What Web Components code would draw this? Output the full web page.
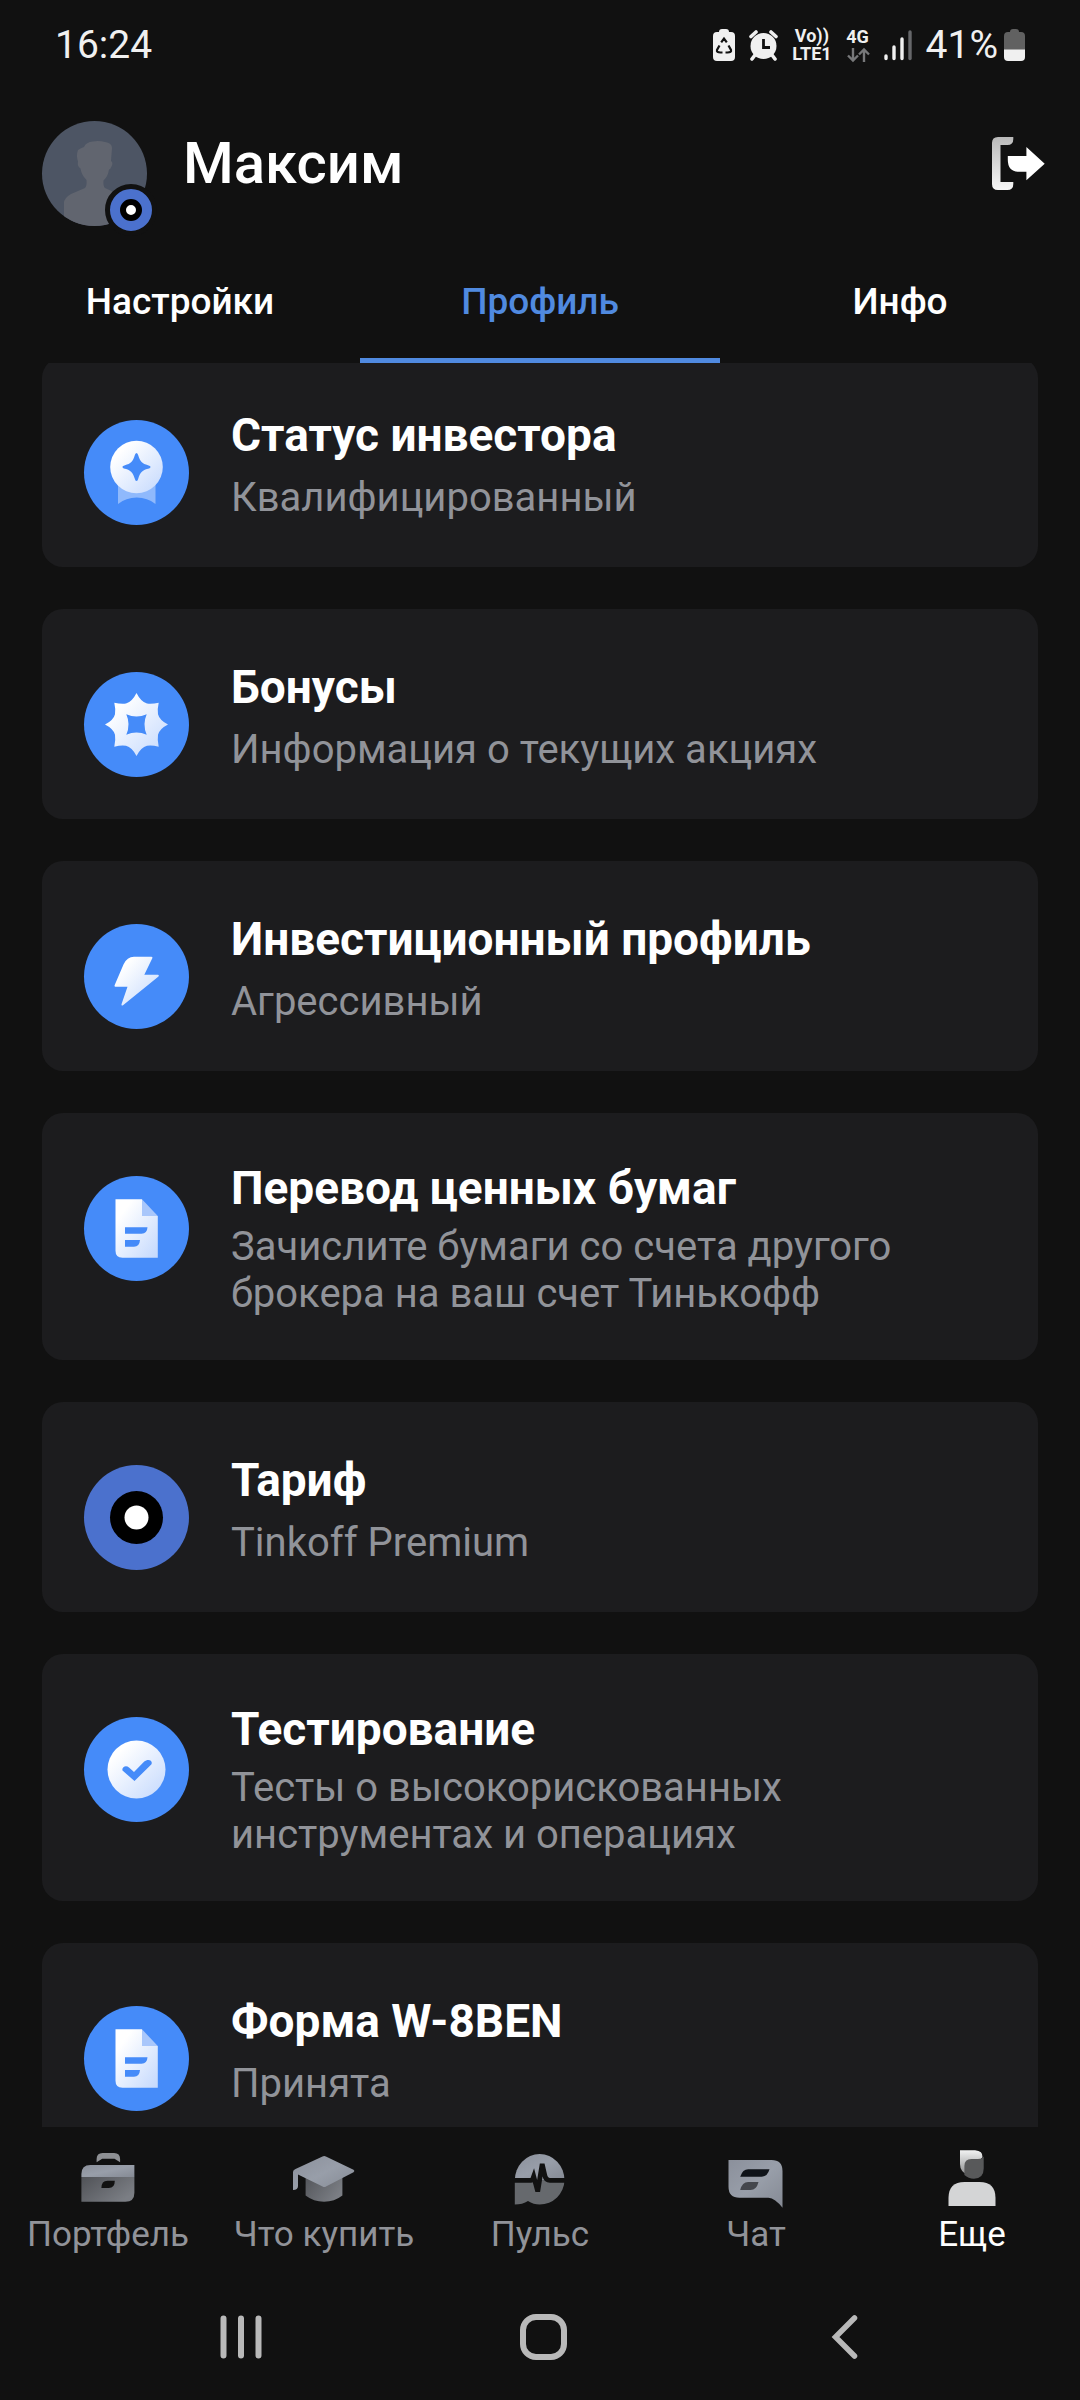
<!DOCTYPE html>
<html lang="ru">
<head>
<meta charset="utf-8">
<meta name="viewport" content="width=device-width, initial-scale=1">
<title>Профиль</title>
<style>
  body {
    margin: 0;
    background: #111111;
    color: #ffffff;
    font-family: Roboto, "Noto Sans", sans-serif;
  }
</style>
</head>
<body>
<app-shell>
  <status-bar slot="top" time="16:24" battery="41%"></status-bar>
  <profile-header slot="top" name="Максим"></profile-header>
  <tab-bar slot="top">
    <tab-item>Настройки</tab-item>
    <tab-item active>Профиль</tab-item>
    <tab-item>Инфо</tab-item>
  </tab-bar>

  <info-card icon="medal">Статус инвестора<span slot="text">Квалифицированный</span></info-card>
  <info-card icon="bonus">Бонусы<span slot="text">Информация о текущих акциях</span></info-card>
  <info-card icon="bolt">Инвестиционный профиль<span slot="text">Агрессивный</span></info-card>
  <info-card icon="document">Перевод ценных бумаг<span slot="text">Зачислите бумаги со счета другого брокера на ваш счет Тинькофф</span></info-card>
  <info-card icon="tariff">Тариф<span slot="text">Tinkoff Premium</span></info-card>
  <info-card icon="check">Тестирование<span slot="text">Тесты о высокорискованных инструментах и операциях</span></info-card>
  <info-card icon="document">Форма W-8BEN<span slot="text">Принята</span></info-card>

  <bottom-nav slot="bottom">
    <nav-item icon="briefcase">Портфель</nav-item>
    <nav-item icon="cap">Что купить</nav-item>
    <nav-item icon="pulse">Пульс</nav-item>
    <nav-item icon="chat">Чат</nav-item>
    <nav-item icon="person" active>Еще</nav-item>
  </bottom-nav>
  <system-nav slot="bottom"></system-nav>
</app-shell>

<script>
const shine = `
  <defs>
    <linearGradient id="shine" x1="0" y1="0" x2="1" y2="1">
      <stop offset="0.2" stop-color="#ffffff"/>
      <stop offset="1" stop-color="#c3d8fd"/>
    </linearGradient>
  </defs>`;

const disc = `<circle cx="52.5" cy="52.5" r="52.5" fill="#458bf9"/>`;

const steel = `
  <defs>
    <linearGradient id="light" x1="0" y1="0" x2="1" y2="1">
      <stop offset="0" stop-color="#8b909b"/>
      <stop offset="0.5" stop-color="#989ea9"/>
      <stop offset="1" stop-color="#858a94"/>
    </linearGradient>
    <linearGradient id="dark" x1="0" y1="0" x2="1" y2="0.6">
      <stop offset="0" stop-color="#505257"/>
      <stop offset="1" stop-color="#7b7e84"/>
    </linearGradient>
  </defs>`;

// [width, height, markup]
const icons = {
  medal: [105, 105, `${shine}${disc}
    <path d="M34 60h37.500v24q-8-6.500-18.750-6.500T34 84z" fill="#8fb9fc"/>
    <circle cx="52.500" cy="47" r="26.300" fill="url(#shine)"/>
    <path d="M52.500 33q1.200 0 1.800 2.500c1.700 5.700 4 8.300 9.700 9.700 1.800.5 2.500 1 2.500 1.800s-.7 1.300-2.500 1.800c-5.700 1.400-8 4-9.700 9.700q-.600 2.500-1.800 2.500t-1.800-2.500c-1.700-5.700-4-8.300-9.700-9.700-1.800-.5-2.500-1-2.500-1.800s.7-1.300 2.500-1.800c5.700-1.400 8-4 9.700-9.700q.600-2.500 1.800-2.500z" fill="#458bf9"/>`],
  bonus: [105, 105, `${shine}${disc}
    <path fill="url(#shine)" fill-rule="evenodd" d="M52.500 21Q57 30 63 31.500q5 .7 11.700-.8-1.500 6.500-.7 11.500 1.500 6 10 10.300-8.500 4.300-10 10.300-.8 5 .7 11.900-6.700-1.600-11.700-.9-6 1.500-10.500 10.200Q48 75.300 42 73.800q-5-.7-11.700.9 1.500-6.900.7-11.900-1.500-6-10-10.300 8.500-4.300 10-10.300.8-5-.7-11.500 6.700 1.500 11.700.8Q48 30 52.500 21zM42.300 42.300q4.500 10.200 0 20.400 10.200-4.500 20.400 0-4.500-10.200 0-20.400-10.200 4.500-20.400 0z"/>`],
  bolt: [105, 105, `${shine}${disc}
    <path d="M50 32.700h17.500q1.500 0 .8 1.500l-8 16.500H74q1.500.3.500 1.700L39 81.300q-1.800.8-1.500-1l6-17.600H31.300q-1.200-.2-.7-1.500l9-21q3.400-7.300 10.400-7.500z" fill="url(#shine)"/>`],
  document: [105, 105, `${shine}${disc}
    <path d="M58 23.300 73.800 40H58z" fill="#a9c7fb"/>
    <path d="M31.500 23.300H58V40h15.800v41.700H38.500q-7 0-7-7z" fill="url(#shine)"/>
    <path d="M41 51.300h22.500q-.3 6.400-6 6.400H41zM41 64h15q-.5 6.700-6 6.700h-9z" fill="#458bf9"/>`],
  tariff: [105, 105, `
    <circle cx="52.500" cy="52.500" r="52.500" fill="#4b71cd"/>
    <circle cx="52.500" cy="52.500" r="26.500" fill="#000"/>
    <circle cx="52.500" cy="52.500" r="12" fill="#fff"/>`],
  check: [105, 105, `${shine}${disc}
    <circle cx="52.500" cy="52.500" r="29" fill="url(#shine)"/>
    <path d="M38.500 53.500c-1-3.500 3.500-5.700 6.500-3l5 4.500 10-10.300c4-3.300 9-1.500 7.500 2.500L50.500 64z" fill="#458bf9"/>`],

  briefcase: [63, 63, `${steel}
    <path d="M19.600 17.300V14q0-6 6-6h11.500q6 0 6 6v3.300l-5.600-3.500H25.200z" fill="#8e9094"/>
    <path d="M4.400 32v-3q0-9 9-9h44v12z" fill="url(#light)"/>
    <path fill="url(#dark)" fill-rule="evenodd" d="M4.400 32h53v15.700q0 9-9 9h-44zM24.400 43h7.400q6 0 6-7.300h-7.400q-6 0-6 7.300z"/>`],
  cap: [63, 63, `${steel}
    <path d="M12.600 26h36.800v24.500q-8 6.200-18.400 6.200t-18.400-6.200z" fill="url(#dark)"/>
    <path d="M29.500 11.500q1.700-.9 3.400 0l27.600 13.300q1.800 1.200 0 2.500L33 41.400q-1.700 1-3.400 0L5 29.500V41q0 4-5 4V27q0-2.200 2.500-3z" fill="url(#light)"/>`],
  pulse: [63, 63, `${steel}
    <path d="M5.800 35.300h49.700A24.800 24.800 0 0 1 30.700 59.500q-6.200 0-11.700-3.500-5.500 3.500-13.200 3.500z" fill="#66696d"/>
    <path d="M5.800 35.300a24.800 26.300 0 0 1 49.700 0z" fill="url(#light)"/>
    <path d="M5 35.300h17q1.300 0 1.800-1.500l.9-2.500 4 15.200 4.500-27.500 2.500 11q1 5.300 5.300 5.300H57" fill="none" stroke="#111111" stroke-width="4.800"/>`],
  chat: [63, 63, `${steel}
    <path d="M3.500 15h43q11 0 11 11v36.700q-7.500-9.500-14-10H14.500q-11 0-11-11z" fill="url(#light)"/>
    <path d="M15.200 31.700q2.500-7.400 8-7.400h21.300q-2 7.400-8 7.400z" fill="#0f1319"/>
    <path d="M15.200 45q2-8 8-8h10.300q-2 8-8 8z" fill="#44474d"/>`],
  person: [63, 63, `
    <defs>
      <linearGradient id="hair" x1="0" y1="0" x2="0" y2="1">
        <stop offset="0" stop-color="#f2f3f3"/>
        <stop offset="1" stop-color="#8b8c8d"/>
      </linearGradient>
    </defs>
    <path d="M19 5.300h15q8 .5 7.500 7l-3 3L27 30Q19 27 19 19z" fill="url(#hair)"/>
    <path d="M42.700 11.500v12q0 10-9.800 10.200-5.500 0-9.500-3.700V21q0-7 7-7H37q4.500 0 5.700-2.500z" fill="#58595a"/>
    <path d="M7.500 61v-8q0-16 16-16h15q16 0 16 16v8z" fill="#d4d5d6"/>`],

  logout: [53, 53, `
    <defs>
      <linearGradient id="door" x1="0" y1="0" x2="0" y2="1">
        <stop offset="0" stop-color="#b9b9b9"/>
        <stop offset="1" stop-color="#f7f7f7"/>
      </linearGradient>
    </defs>
    <path d="M6 0h15.300v2q0 6-6 6H8.500v37h12.800v2q0 6-6 6H6q-6 0-6-6V6q0-6 6-6z" fill="url(#door)"/>
    <path d="M15.800 19h18.600v-9L52.700 26.700 34.400 43.300v-8.600H27q-11.200 0-11.200-12z" fill="#fff"/>`],
  saver: [22, 32, `
    <path d="M6 3q0-3 3-3h4q3 0 3 3h2q4 0 4 4v21q0 4-4 4H4q-4 0-4-4V7q0-4 4-4z" fill="#f0f0f0"/>
    <path d="M8.200 13.300 11 9.500l2.800 3.800m1.700 3.200 2.500 4.500q.7 2.500-3.500 2.500h-2m-3 0h-2Q3.300 23.500 4 21l2.500-4.500" fill="none" stroke="#111" stroke-width="2.200"/>`],
  alarm: [29, 31, `
    <path d="m2 6.500 5-4.500m15 0 5 4.500M6 25l-3 4m20-4 3 4" stroke="#f0f0f0" stroke-width="3.600" stroke-linecap="round"/>
    <circle cx="14.500" cy="16" r="13" fill="#f0f0f0"/>
    <path d="M14.500 9v8.500H21" fill="none" stroke="#111" stroke-width="2.800"/>`],
  arrows: [24, 14, `
    <path d="M7 0v12.500m-5-5 5 5 5-5M18 14V1.500m-5 5 5-5 5 5" fill="none" stroke="#77787a" stroke-width="2.400"/>`],
  signal: [28, 30, `
    <path d="M2 26v2.500M10 17v11.500M18 9v19.500" stroke="#f0f0f0" stroke-width="3.400" stroke-linecap="round"/>
    <path d="M26 2v26.500" stroke="#66676a" stroke-width="3.400" stroke-linecap="round"/>`],
  battery: [21, 32, `
    <path d="M6 3q0-3 3-3h3q3 0 3 3h2q4 0 4 4v14H0V7q0-4 4-4z" fill="#616161"/>
    <path d="M0 20.500h21V28q0 4-4 4H4q-4 0-4-4z" fill="#f0f0f0"/>`],
  recents: [42, 44, `<path d="M3.500 3.500v37M21 3.500v37M38.500 3.500v37" stroke="#b9b9b9" stroke-width="6" stroke-linecap="round"/>`],
  home: [47, 46, `<rect x="3" y="3" width="41" height="40" rx="13" fill="none" stroke="#b9b9b9" stroke-width="6"/>`],
  back: [26, 44, `<path d="M22.500 3 3.500 22l19 19" fill="none" stroke="#b9b9b9" stroke-width="5.500" stroke-linecap="round"/>`],
  avatar: [105, 105, `
    <circle cx="52.500" cy="52.500" r="52.500" fill="#4d5564"/>
    <clipPath id="face"><circle cx="52.500" cy="52.500" r="52.500"/></clipPath>
    <path clip-path="url(#face)" d="M22 105V82q0-5 7-9l14-6q2-2 1.500-8-5-5-6-11.500-3.500-2-2.500-7-2-6 0-11.500 3-2 6-3 2-5 9-5.500 6-1 12 .5 7 1 7 6l-1 13q2.500 1.500.5 5.500-1 2.500-2.500 3-1 7-5.500 11-.5 6 1.500 7.500l13 6q8 4 8 9v23z" fill="#61656f"/>`],
};

class BaseElement extends HTMLElement {
  constructor() {
    super();
    this._shadowRoot = this.attachShadow({ mode: "open" });
  }

  connectedCallback() {
    this._shadowRoot.innerHTML = this.render();
  }
}

class AppIcon extends BaseElement {
  render() {
    const [width, height, markup] = icons[this.getAttribute("name")];
    return `
      <style>
        :host { display: block; flex: none; }
        svg { display: block; overflow: visible; }
      </style>
      <svg width="${width}" height="${height}" viewBox="0 0 ${width} ${height}" aria-hidden="true">${markup}</svg>
    `;
  }
}

class AppShell extends BaseElement {
  render() {
    return `
      <style>
        :host {
          display: flex;
          flex-direction: column;
          height: 100vh;
        }

        main {
          display: flex;
          flex-direction: column;
          flex: 1;
          gap: 42px;
          min-height: 0;
          padding: 0 42px;
          overflow-y: auto;
          scrollbar-width: none;
        }
      </style>
      <slot name="top"></slot>
      <main><slot></slot></main>
      <slot name="bottom"></slot>
    `;
  }
}

class StatusBar extends BaseElement {
  render() {
    return `
      <style>
        :host {
          display: flex;
          align-items: center;
          justify-content: space-between;
          height: 88px;
          padding: 2px 55px 0;
          box-sizing: border-box;
          color: #f0f0f0;
          font-size: 39px;
          line-height: 48px;
        }

        .icons {
          display: flex;
          align-items: center;
          gap: 14px;
        }

        .stack {
          display: flex;
          flex-direction: column;
          align-items: center;
          font-size: 18px;
          font-weight: 700;
          line-height: 18px;
        }

        .network {
          gap: 2px;
        }

        .battery {
          display: flex;
          align-items: center;
          gap: 6px;
        }
      </style>
      <span>${this.getAttribute("time")}</span>
      <div class="icons">
        <app-icon name="saver"></app-icon>
        <app-icon name="alarm"></app-icon>
        <div class="stack"><span>Vo))</span><span>LTE1</span></div>
        <div class="stack network"><span>4G</span><app-icon name="arrows"></app-icon></div>
        <app-icon name="signal"></app-icon>
        <div class="battery">${this.getAttribute("battery")}<app-icon name="battery"></app-icon></div>
      </div>
    `;
  }
}

class ProfileHeader extends BaseElement {
  render() {
    return `
      <style>
        :host {
          display: flex;
          align-items: flex-start;
          gap: 36px;
          padding: 33px 35px 11px 42px;
        }

        .avatar {
          position: relative;
        }

        .badge {
          position: absolute;
          right: -10px;
          bottom: -10px;
          display: grid;
          place-items: center;
          width: 42px;
          height: 42px;
          border: 5px solid #111111;
          border-radius: 50%;
          background: #4b71cd;
        }

        .badge::after {
          content: "";
          width: 10px;
          height: 10px;
          border: 6px solid #000000;
          border-radius: 50%;
          background: #ffffff;
        }

        h1 {
          flex: 1;
          margin: 0;
          font-size: 58px;
          font-weight: 500;
          line-height: 84px;
        }

        button {
          display: flex;
          align-items: center;
          height: 84px;
          padding: 0;
          border: 0;
          background: none;
          cursor: pointer;
        }
      </style>
      <div class="avatar"><app-icon name="avatar"></app-icon><span class="badge"></span></div>
      <h1>${this.getAttribute("name")}</h1>
      <button type="button" aria-label="Выйти"><app-icon name="logout"></app-icon></button>
    `;
  }
}

class TabBar extends BaseElement {
  render() {
    return `
      <style>
        :host { display: flex; }
      </style>
      <slot></slot>
    `;
  }
}

class TabItem extends BaseElement {
  render() {
    return `
      <style>
        :host {
          display: block;
          flex: 1;
        }

        button {
          width: 100%;
          padding: 43px 0 34px;
          border: 0;
          border-bottom: 5px solid transparent;
          background: none;
          color: #ffffff;
          font: 500 37px/44px Roboto, "Noto Sans", sans-serif;
          cursor: pointer;
        }

        :host([active]) button {
          border-color: #508ae0;
          color: #508ae0;
        }
      </style>
      <button type="button"><slot></slot></button>
    `;
  }
}

class InfoCard extends BaseElement {
  render() {
    return `
      <style>
        :host {
          display: block;
          flex: none;
        }

        a {
          display: flex;
          align-items: flex-start;
          gap: 42px;
          padding: 0 42px;
          border-radius: 21px;
          background: #1c1c1e;
          color: inherit;
          text-decoration: none;
        }

        app-icon {
          padding-top: 63px;
        }

        .content {
          display: flex;
          flex-direction: column;
          justify-content: space-evenly;
          gap: 8px;
          max-width: 680px;
          min-height: 210px;
          padding: 49px 0 43px;
          box-sizing: border-box;
        }

        h2 {
          margin: 0;
          font-size: 46px;
          font-weight: 700;
          line-height: 53px;
        }

        p {
          margin: 0;
          color: #919399;
          font-size: 40px;
          line-height: 47px;
        }
      </style>
      <a href="#">
        <app-icon name="${this.getAttribute("icon")}"></app-icon>
        <div class="content">
          <h2><slot></slot></h2>
          <p><slot name="text"></slot></p>
        </div>
      </a>
    `;
  }
}

class BottomNav extends BaseElement {
  render() {
    return `
      <style>
        :host {
          display: flex;
          background: #111111;
        }
      </style>
      <slot></slot>
    `;
  }
}

class NavItem extends BaseElement {
  render() {
    return `
      <style>
        :host {
          display: block;
          flex: 1;
          min-width: 0;
        }

        a {
          display: flex;
          flex-direction: column;
          align-items: center;
          gap: 7px;
          padding: 18px 0 19px;
          color: #919399;
          font-size: 35px;
          line-height: 40px;
          text-decoration: none;
          white-space: nowrap;
        }

        :host([active]) a {
          color: #ffffff;
        }
      </style>
      <a href="#"><app-icon name="${this.getAttribute("icon")}"></app-icon><span><slot></slot></span></a>
    `;
  }
}

class SystemNav extends BaseElement {
  render() {
    return `
      <style>
        :host {
          display: flex;
          padding: 0 84px 0 90px;
        }

        button {
          display: grid;
          flex: 1;
          place-items: center;
          height: 126px;
          padding: 0;
          border: 0;
          background: none;
        }
      </style>
      <button type="button" aria-label="Недавние"><app-icon name="recents"></app-icon></button>
      <button type="button" aria-label="Домой"><app-icon name="home"></app-icon></button>
      <button type="button" aria-label="Назад"><app-icon name="back"></app-icon></button>
    `;
  }
}

customElements.define("app-icon", AppIcon);
customElements.define("status-bar", StatusBar);
customElements.define("profile-header", ProfileHeader);
customElements.define("tab-bar", TabBar);
customElements.define("tab-item", TabItem);
customElements.define("info-card", InfoCard);
customElements.define("bottom-nav", BottomNav);
customElements.define("nav-item", NavItem);
customElements.define("system-nav", SystemNav);
customElements.define("app-shell", AppShell);

// the list starts slightly scrolled under the tabs
document.querySelector("app-shell").shadowRoot.querySelector("main").scrollTop = 6;
</script>
</body>
</html>
